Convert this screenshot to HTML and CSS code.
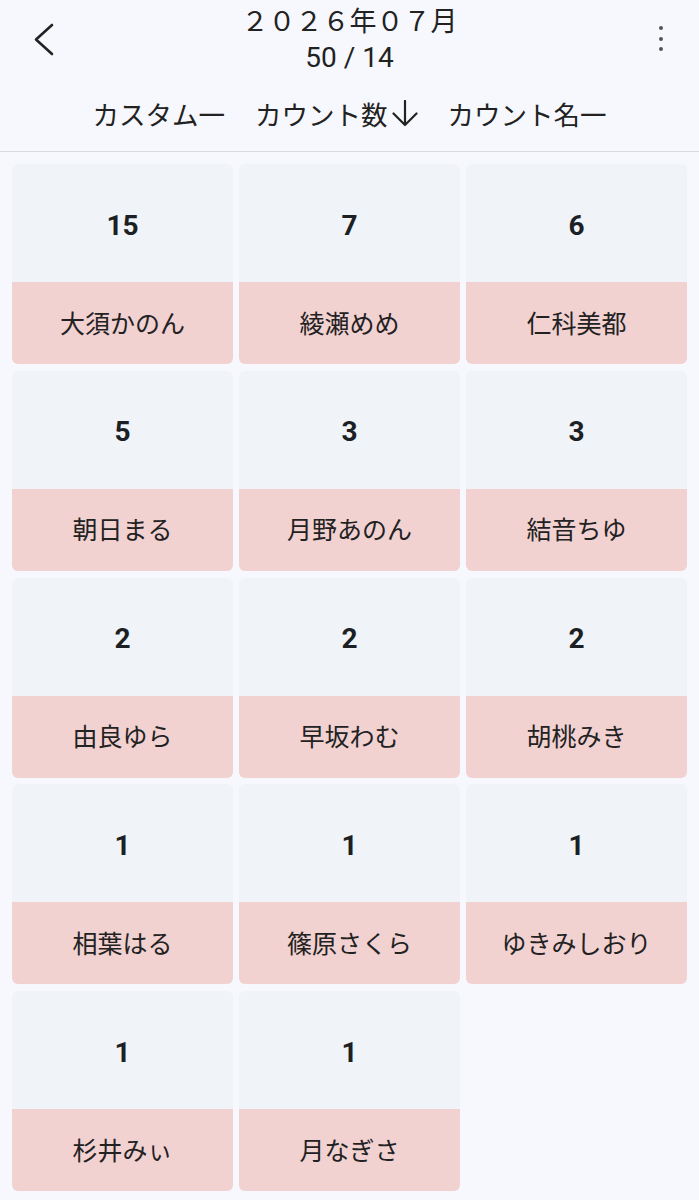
FILE: index.html
```html
<!DOCTYPE html>
<html lang="ja">

<head>
    <meta charset="UTF-8">
    <meta name="viewport" content="width=device-width, initial-scale=1.0">
    <title>カウント一覧</title>
    <link rel="stylesheet" href="styles.css">
</head>

<body>
    <header class="topbar">
        <button class="icon-button back" aria-label="戻る">
            <svg width="22" height="34" viewBox="0 0 22 34">
                <path d="M19 3 L3 17.5 L19 32" fill="none" stroke="#222" stroke-width="2.6" stroke-linecap="round" stroke-linejoin="round" />
            </svg>
        </button>
        <div class="title">
            <div class="title-month">２０２６年０７月</div>
            <div class="title-count">50 / 14</div>
        </div>
        <button class="icon-button menu" aria-label="メニュー">
            <span class="dot"></span>
            <span class="dot"></span>
            <span class="dot"></span>
        </button>
    </header>

    <nav class="sortbar">
        <span class="sort-item">カスタム一</span>
        <span class="sort-item">カウント数<svg class="sort-arrow" width="26" height="27" viewBox="0 0 26 27">
                <path d="M13 1 V25 M1.5 13.5 L13 25 L24.5 13.5" fill="none" stroke="#222" stroke-width="2.2" stroke-linecap="round" stroke-linejoin="round" />
            </svg></span>
        <span class="sort-item">カウント名一</span>
    </nav>

    <main class="grid">
        <div class="card"><div class="count">15</div><div class="name">大須かのん</div></div>
        <div class="card"><div class="count">7</div><div class="name">綾瀬めめ</div></div>
        <div class="card"><div class="count">6</div><div class="name">仁科美都</div></div>
        <div class="card"><div class="count">5</div><div class="name">朝日まる</div></div>
        <div class="card"><div class="count">3</div><div class="name">月野あのん</div></div>
        <div class="card"><div class="count">3</div><div class="name">結音ちゆ</div></div>
        <div class="card"><div class="count">2</div><div class="name">由良ゆら</div></div>
        <div class="card"><div class="count">2</div><div class="name">早坂わむ</div></div>
        <div class="card"><div class="count">2</div><div class="name">胡桃みき</div></div>
        <div class="card"><div class="count">1</div><div class="name">相葉はる</div></div>
        <div class="card"><div class="count">1</div><div class="name">篠原さくら</div></div>
        <div class="card"><div class="count">1</div><div class="name">ゆきみしおり</div></div>
        <div class="card"><div class="count">1</div><div class="name">杉井みぃ</div></div>
        <div class="card"><div class="count">1</div><div class="name">月なぎさ</div></div>
    </main>
</body>

</html>
```

FILE: styles.css
```css
body {
    margin: 0;
    background-color: #f7f8fd;
    color: #222;
    font-family: Roboto, "Noto Sans CJK JP", sans-serif;
}

.topbar {
    height: 80px;
    display: grid;
    grid-template-columns: 80px 1fr 80px;
    align-items: start;
}

.icon-button {
    background: none;
    border: none;
    padding: 0;
    cursor: pointer;
}

.back {
    margin: 22px 0 0 33px;
    justify-self: start;
}

.menu {
    margin: 26px 32px 0 0;
    justify-self: end;
    width: 12px;
    display: flex;
    flex-direction: column;
    align-items: center;
    gap: 6.5px;
}

.dot {
    width: 4px;
    height: 4px;
    border-radius: 50%;
    background-color: #555;
}

.title {
    padding-top: 5px;
    text-align: center;
    line-height: 35px;
}

.title-month {
    font-size: 27px;
}

.title-count {
    font-size: 28px;
}

.sortbar {
    height: 72px;
    padding-bottom: 4px;
    box-sizing: border-box;
    display: flex;
    align-items: center;
    justify-content: center;
    gap: 30px;
    font-family: "Noto Sans CJK JP", sans-serif;
    font-size: 26.5px;
    border-bottom: 1px solid #d9dadf;
}

.sort-item {
    display: flex;
    align-items: center;
}

.sort-arrow {
    margin-left: 4px;
}

.grid {
    display: grid;
    grid-template-columns: repeat(3, 1fr);
    gap: 6.75px 6px;
    padding: 12px;
}

.card {
    height: 200px;
    border-radius: 6px;
    overflow: hidden;
    display: flex;
    flex-direction: column;
}

.count {
    height: 118px;
    padding-top: 4px;
    box-sizing: border-box;
    display: flex;
    align-items: center;
    justify-content: center;
    background-color: #f0f3f7;
    font-size: 28px;
    font-weight: bold;
    color: #1c1f24;
}

.name {
    flex: 1;
    padding-bottom: 3px;
    display: flex;
    align-items: center;
    justify-content: center;
    background-color: #f2d1d1;
    font-size: 25px;
}
```
